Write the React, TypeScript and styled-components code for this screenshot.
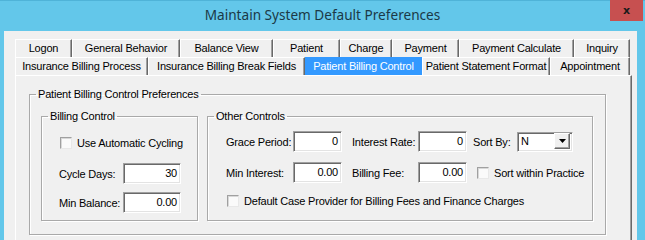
import React from 'react';
import styled, { createGlobalStyle } from 'styled-components';

const GlobalStyle = createGlobalStyle`
  html, body {
    margin: 0;
    padding: 0;
    background: #63c7ea;
  }
  body {
    font-family: "Liberation Sans", Arial, sans-serif;
    font-size: 11px;
    letter-spacing: -0.2px;
    color: #000;
  }
`;

const Window = styled.div`
  width: 645px;
  height: 240px;
  display: flex;
  flex-direction: column;
  background: #63c7ea;
  overflow: hidden;
`;

const TitleBar = styled.div`
  height: 31px;
  flex: none;
  display: flex;
  align-items: flex-start;
  box-sizing: border-box;
  border-top: 1px solid #4fb3d8;
`;

const Title = styled.div`
  flex: 1;
  padding-left: 35px;
  margin-top: 4px;
  text-align: center;
  font-family: "Noto Sans", "Open Sans", sans-serif;
  font-size: 13.6px;
  letter-spacing: 0;
  color: #1b3947;
`;

const CloseButton = styled.div`
  width: 33px;
  height: 21px;
  margin-top: -1px;
  margin-right: 2px;
  background: #c75050;
  display: flex;
  align-items: center;
  justify-content: center;
  font-family: "DejaVu Sans", sans-serif;
  font-weight: bold;
  font-size: 11px;
  color: #1a1a1a;
`;

const Client = styled.div`
  flex: 1;
  margin: 0 8px 0 4px;
  background: #f0f0f0;
  padding: 8px 0 0 11px;
  overflow: hidden;
`;

const TabControl = styled.div`
  width: 617px;
  display: flex;
  flex-direction: column;
`;

const TabRow = styled.div`
  display: flex;
  height: 18px;
`;

const Tab = styled.div<{ $w: number; $active?: boolean }>`
  width: ${({ $w }) => $w}px;
  flex: none;
  box-sizing: border-box;
  height: 18px;
  line-height: 17px;
  text-align: center;
  white-space: nowrap;
  background: ${({ $active }) => ($active ? '#3399ff' : '#f0f0f0')};
  color: ${({ $active }) => ($active ? '#fff' : '#000')};
  border-top: 1px solid ${({ $active }) => ($active ? '#3399ff' : '#fff')};
  border-left: 1px solid ${({ $active }) => ($active ? '#3399ff' : '#fff')};
  border-right: 1px solid ${({ $active }) => ($active ? '#3399ff' : '#696969')};
  box-shadow: ${({ $active }) => ($active ? 'none' : 'inset -1px 0 0 #a0a0a0')};
`;

const Panel = styled.div`
  width: 617px;
  height: 170px;
  box-sizing: border-box;
  border-top: 1px solid #fff;
  border-left: 1px solid #fff;
  border-right: 1px solid #696969;
  box-shadow: inset -1px 0 0 #a0a0a0;
  padding: 12px 0 0 13px;
`;

const Group = styled.fieldset<{ $w: number; $h: number }>`
  width: ${({ $w }) => $w}px;
  height: ${({ $h }) => $h}px;
  box-sizing: border-box;
  margin: 0;
  min-width: 0;
  padding: 0;
  border: 1px solid #a9a9a9;
  box-shadow: inset 1px 1px 0 #fff, 1px 1px 0 #fff;
  flex: none;
`;

const Legend = styled.legend`
  margin-left: 6px;
  padding: 0 2px;
  line-height: 13px;
`;

const GroupBody = styled.div<{ $pl: number; $pt: number }>`
  padding: ${({ $pt, $pl }) => `${$pt}px 0 0 ${$pl}px`};
`;

const GroupRow = styled.div`
  display: flex;
  gap: 9px;
`;

const Row = styled.div<{ $mt?: number }>`
  display: flex;
  align-items: center;
  height: 21px;
  margin-top: ${({ $mt }) => $mt ?? 0}px;
`;

const Label = styled.span<{ $w: number; $ml?: number }>`
  width: ${({ $w }) => $w}px;
  margin-left: ${({ $ml }) => $ml ?? 0}px;
  flex: none;
  white-space: nowrap;
`;

const Field = styled.div<{ $w: number }>`
  width: ${({ $w }) => $w}px;
  height: 21px;
  flex: none;
  box-sizing: border-box;
  background: #fff;
  border-style: solid;
  border-width: 1px;
  border-color: #a0a0a0 #fff #fff #a0a0a0;
  box-shadow: inset 1px 1px 0 #696969, inset -1px -1px 0 #e3e3e3;
  display: flex;
  align-items: center;
  justify-content: flex-end;
  padding: 0 3px 1px 0;
`;

const Combo = styled.div`
  width: 56px;
  height: 20px;
  flex: none;
  box-sizing: border-box;
  background: #fff;
  border-style: solid;
  border-width: 1px;
  border-color: #a0a0a0 #fff #fff #a0a0a0;
  box-shadow: inset 1px 1px 0 #696969, inset -1px -1px 0 #e3e3e3;
  display: flex;
  align-items: center;
  padding: 1px 2px 2px 3px;
`;

const ComboText = styled.span`
  flex: 1;
`;

const DropButton = styled.div`
  width: 16px;
  height: 16px;
  box-sizing: border-box;
  background: #f0f0f0;
  border-style: solid;
  border-width: 1px;
  border-color: #fff #696969 #696969 #fff;
  box-shadow: inset -1px -1px 0 #a0a0a0;
  display: flex;
  align-items: center;
  justify-content: center;
`;

const Check = styled.div<{ $ml?: number }>`
  width: 12px;
  height: 12px;
  flex: none;
  box-sizing: border-box;
  margin-left: ${({ $ml }) => $ml ?? 0}px;
  margin-right: 5px;
  background: #fafafa;
  border-style: solid;
  border-width: 1px;
  border-color: #a0a0a0 #e8e8e8 #e8e8e8 #a0a0a0;
  box-shadow: inset 1px 1px 0 #d8d8d8;
`;

const row1: [string, number][] = [
  ['Logon', 57],
  ['General Behavior', 108],
  ['Balance View', 93],
  ['Patient', 67],
  ['Charge', 52],
  ['Payment', 67],
  ['Payment Calculate', 115],
  ['Inquiry', 56],
];

const row2: [string, number][] = [
  ['Insurance Billing Process', 133],
  ['Insurance Billing Break Fields', 157],
  ['Patient Billing Control', 117],
  ['Patient Statement Format', 128],
  ['Appointment', 80],
];

export default function App() {
  return (
    <>
      <GlobalStyle />
      <Window>
        <TitleBar>
          <Title>Maintain System Default Preferences</Title>
          <CloseButton>x</CloseButton>
        </TitleBar>
        <Client>
          <TabControl>
            <TabRow>
              {row1.map(([t, w]) => (
                <Tab key={t} $w={w}>{t}</Tab>
              ))}
            </TabRow>
            <TabRow>
              {row2.map(([t, w]) => (
                <Tab key={t} $w={w} $active={t === 'Patient Billing Control'}>{t}</Tab>
              ))}
            </TabRow>
            <Panel>
              <Group $w={577} $h={147}>
                <Legend>Patient Billing Control Preferences</Legend>
                <GroupBody $pl={11} $pt={9}>
                  <GroupRow>
                    <Group $w={157} $h={111}>
                      <Legend>Billing Control</Legend>
                      <GroupBody $pl={17} $pt={9}>
                        <Row>
                          <Check $ml={1} />
                          <span>Use Automatic Cycling</span>
                        </Row>
                        <Row $mt={10}>
                          <Label $w={64}>Cycle Days:</Label>
                          <Field $w={58}>30</Field>
                        </Row>
                        <Row $mt={8}>
                          <Label $w={64}>Min Balance:</Label>
                          <Field $w={58}>0.00</Field>
                        </Row>
                      </GroupBody>
                    </Group>
                    <Group $w={386} $h={111}>
                      <Legend>Other Controls</Legend>
                      <GroupBody $pl={18} $pt={8}>
                        <Row>
                          <Label $w={67}>Grace Period:</Label>
                          <Field $w={49}>0</Field>
                          <Label $w={66} $ml={10}>Interest Rate:</Label>
                          <Field $w={49}>0</Field>
                          <Label $w={44} $ml={6}>Sort By:</Label>
                          <Combo>
                            <ComboText>N</ComboText>
                            <DropButton>
                              <svg width="7" height="4" viewBox="0 0 7 4">
                                <path d="M0 0h7L3.5 4z" fill="#000" />
                              </svg>
                            </DropButton>
                          </Combo>
                        </Row>
                        <Row $mt={10}>
                          <Label $w={67}>Min Interest:</Label>
                          <Field $w={49}>0.00</Field>
                          <Label $w={66} $ml={10}>Billing Fee:</Label>
                          <Field $w={49}>0.00</Field>
                          <Check $ml={10} />
                          <span>Sort within Practice</span>
                        </Row>
                        <Row $mt={7}>
                          <Check $ml={1} />
                          <span>Default Case Provider for Billing Fees and Finance Charges</span>
                        </Row>
                      </GroupBody>
                    </Group>
                  </GroupRow>
                </GroupBody>
              </Group>
            </Panel>
          </TabControl>
        </Client>
      </Window>
    </>
  );
}
